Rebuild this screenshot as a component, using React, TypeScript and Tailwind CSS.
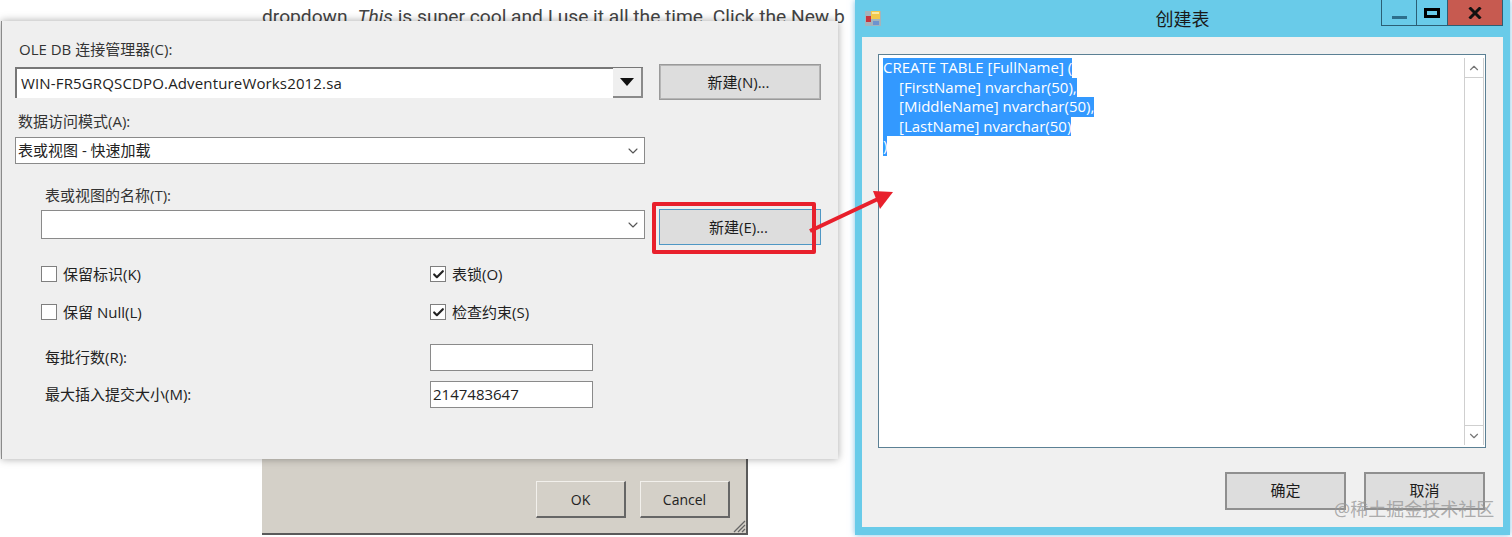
import { Check, ChevronDown, ChevronUp } from 'lucide-react';

const FONT = "font-['Open_Sans','Noto_Sans_CJK_SC',sans-serif]";

function WinButton({ label, focused }: { label: string; focused?: boolean }) {
  return (
    <div
      className={`flex h-[36px] w-[162px] shrink-0 items-center justify-center border bg-[#dddddd] pr-[3px] text-[15px] text-[#1c1c1c] ${
        focused ? 'border-[#4f97c4]' : 'border-[#9a9a9a] outline outline-[#b5b5b5] -outline-offset-2'
      }`}
    >
      {label}
    </div>
  );
}

function SelectBox({ text, className }: { text?: string; className: string }) {
  return (
    <div
      className={`flex items-center justify-between border border-[#8a8a8a] bg-white pr-[3px] pl-[2px] text-[15px] text-[#222] ${className}`}
    >
      <span>{text}</span>
      <ChevronDown size={16} strokeWidth={1.6} className="text-[#555]" />
    </div>
  );
}

function CheckField({ label, checked }: { label: string; checked?: boolean }) {
  return (
    <div className="flex h-[20px] items-center gap-[6px] text-[15px] text-[#222]">
      <div className="flex h-[16px] w-[16px] items-center justify-center border border-[#7f7f7f] bg-white">
        {checked && <Check size={13} strokeWidth={4} className="text-[#222]" />}
      </div>
      <span>{label}</span>
    </div>
  );
}

function OptionsDialog() {
  return (
    <div
      className={`absolute top-[21px] left-[1px] h-[438px] w-[837px] border-l border-[#8a8a8a] bg-[#efefef] pt-[18px] shadow-[0_0_8px_rgba(0,0,0,0.35)] ${FONT}`}
    >
      <div className="ml-[17px] flex h-[20px] items-center text-[15px] text-[#333]">OLE DB 连接管理器(C):</div>

      <div className="mt-[5px] ml-[13px] flex items-center gap-[16px]">
        <div className="flex h-[31px] w-[628px] items-center justify-between border-t-2 border-l-2 border-[#777] bg-white pl-[4px] text-[15px] tracking-[0.15px] text-[#222]">
          <span>WIN-FR5GRQSCDPO.AdventureWorks2012.sa</span>
          <div className="flex h-[30px] w-[30px] items-center justify-center border-r-2 border-b-2 border-[#8a8a8a] bg-[#efefef]">
            <svg width="14" height="8" viewBox="0 0 14 8">
              <path d="M0 0h14L7 8z" fill="#111" />
            </svg>
          </div>
        </div>
        <WinButton label="新建(N)..." />
      </div>

      <div className="mt-[11px] ml-[16px] flex h-[20px] items-center text-[15px] text-[#333]">数据访问模式(A):</div>
      <SelectBox text="表或视图 - 快速加载" className="mt-[6px] ml-[13px] h-[27px] w-[630px]" />

      <div className="mt-[21px] ml-[43px] flex h-[20px] items-center text-[15px] text-[#333]">表或视图的名称(T):</div>
      <div className="mt-[4px] ml-[39px] flex items-start gap-[14px]">
        <SelectBox className="mt-[1px] h-[29px] w-[604px]" />
        <WinButton label="新建(E)..." focused />
      </div>

      <div className="mt-[19px] ml-[39px] grid w-[560px] grid-cols-[389px_1fr] gap-y-[18px]">
        <CheckField label="保留标识(K)" />
        <CheckField label="表锁(O)" checked />
        <CheckField label="保留 Null(L)" />
        <CheckField label="检查约束(S)" checked />
      </div>

      <div className="mt-[22px] ml-[43px] flex items-center">
        <span className="w-[385px] text-[15px] text-[#222]">每批行数(R):</span>
        <div className="h-[27px] w-[163px] border border-[#8a8a8a] bg-white" />
      </div>
      <div className="mt-[10px] ml-[43px] flex items-center">
        <span className="w-[385px] text-[15px] text-[#222]">最大插入提交大小(M):</span>
        <div className="flex h-[27px] w-[163px] items-center border border-[#8a8a8a] bg-white pl-[2px] text-[15px] text-[#222]">
          2147483647
        </div>
      </div>
    </div>
  );
}

function LegacyDialog() {
  return (
    <div
      className={`absolute top-[380px] left-[262px] flex h-[155px] w-[486px] items-end justify-end gap-[14px] border-r-2 border-b-2 border-[#5a5a5a] bg-[#d4d0c8] pr-[16px] pb-[15px] ${FONT}`}
    >
      {['OK', 'Cancel'].map((label) => (
        <div
          key={label}
          className="flex h-[37px] w-[90px] items-center justify-center border-t border-r-2 border-b-2 border-l border-t-[#f2f0ec] border-r-[#666] border-b-[#666] border-l-[#f2f0ec] text-[14px] text-[#222]"
        >
          {label}
        </div>
      ))}
      <svg className="absolute right-0 bottom-0" width="16" height="16" viewBox="0 0 16 16">
        <path d="M15 4 4 15M15 8 8 15M15 12l-3 3" stroke="#666" strokeWidth="1.3" />
      </svg>
    </div>
  );
}

function SqlLine({ text, indent }: { text: string; indent?: boolean }) {
  return (
    <div className={`h-[19.6px] w-fit bg-[#3399ff] leading-[19.6px] text-white ${indent ? 'pl-[16px]' : ''}`}>{text}</div>
  );
}

function CreateTableWindow() {
  return (
    <div
      className={`absolute top-0 left-[855px] flex h-[535px] w-[655px] flex-col bg-[#69cbe9] px-[7px] pb-[8px] shadow-[0_0_6px_rgba(80,170,220,0.7)] ${FONT}`}
    >
      <div className="grid h-[37px] shrink-0 grid-cols-[1fr_auto_1fr]">
        <div className="pt-[11px] pl-[3px]">
          <svg width="16" height="15" viewBox="0 0 16 15">
            <rect width="16" height="15" fill="#a3b4bd" />
            <rect x="6" y="0" width="9" height="8" fill="#f2c84a" />
            <rect x="7" y="1" width="7" height="2" fill="#fbe9a0" />
            <rect x="1" y="5" width="5" height="6" fill="#c8343c" />
            <rect x="8" y="10" width="6" height="4" fill="#6d93cf" />
          </svg>
        </div>
        <div className="pt-[7px] text-[18px] leading-[24px] text-[#1a1a1a]">创建表</div>
        <div className="flex justify-end">
          <div className="flex h-[26px] items-stretch border-r border-b border-l border-[#2b5f75]">
            <div className="flex w-[34px] items-end justify-center pb-[6px]">
              <div className="h-[3px] w-[15px] bg-[#2d6f8c]" />
            </div>
            <div className="flex w-[31px] items-center justify-center border-l border-[#2b5f75]">
              <div className="h-[10px] w-[16px] border-[3px] border-black" />
            </div>
            <div className="flex w-[55px] items-center justify-center border-l border-[#2b5f75] bg-[#c75a50]">
              <svg width="14" height="12" viewBox="0 0 14 12">
                <path d="M1.5 0.5 12.5 11.5M12.5 0.5 1.5 11.5" stroke="#111" strokeWidth="3" />
              </svg>
            </div>
          </div>
        </div>
      </div>

      <div className="flex min-h-0 flex-1 flex-col bg-[#f0f0f0] pt-[17px] pr-[17px] pl-[16px]">
        <div className="flex h-[394px] border border-[#5b8094] bg-white pt-[3px] pr-[1px] pb-[2px] pl-[4px] text-[15px]">
          <div className="flex-1">
            <SqlLine text="CREATE TABLE [FullName] (" />
            <SqlLine indent text="[FirstName] nvarchar(50)," />
            <SqlLine indent text="[MiddleName] nvarchar(50)," />
            <SqlLine indent text="[LastName] nvarchar(50)" />
            <SqlLine text=")" />
          </div>
          <div className="flex w-[20px] flex-col justify-between border-x border-[#cfcfcf]">
            <div className="flex h-[20px] items-center justify-center border-b border-[#cfcfcf]">
              <ChevronUp size={14} className="text-[#777]" />
            </div>
            <div className="flex h-[20px] items-center justify-center border-t border-[#cfcfcf]">
              <ChevronDown size={14} className="text-[#777]" />
            </div>
          </div>
        </div>
        <div className="mt-[24px] mr-[1px] flex justify-end gap-[18px]">
          {['确定', '取消'].map((label) => (
            <div
              key={label}
              className="flex h-[38px] w-[121px] items-center justify-center border-2 border-[#8f8f8f] bg-[#dddddd] pb-[2px] text-[15px] text-[#1c1c1c]"
            >
              {label}
            </div>
          ))}
        </div>
      </div>
    </div>
  );
}

export default function App() {
  return (
    <div className="relative h-[537px] w-[1512px] overflow-hidden bg-white">
      {/* article text behind the dialogs, only its top line shows */}
      <p className="absolute top-[4px] left-[262px] font-['Roboto',sans-serif] text-[19.2px] leading-[26px] whitespace-nowrap text-[#444]">
        dropdown. <em>This</em> is super cool and I use it all the time. Click the New b
      </p>

      <LegacyDialog />
      <OptionsDialog />
      <CreateTableWindow />

      {/* annotation: red box and arrow */}
      <div className="absolute top-[202px] left-[652px] h-[52px] w-[164px] rounded-[2px] border-[4px] border-[#e8202c]" />
      <svg className="absolute top-[180px] left-[800px]" width="100" height="60" viewBox="0 0 100 60">
        <path d="M10 51 80 18" stroke="#e8202c" strokeWidth="4" />
        <path d="M93 12 73 11 80 29z" fill="#e8202c" />
      </svg>

      <div className={`absolute top-[497px] left-[1334px] text-[18px] leading-[24px] whitespace-nowrap text-[#999]/80 ${FONT}`}>
        @稀土掘金技术社区
      </div>
    </div>
  );
}
